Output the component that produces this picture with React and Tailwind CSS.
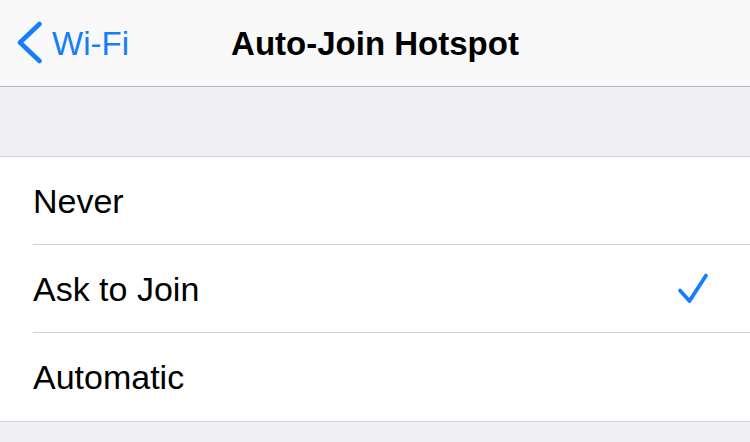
import { useState } from "react";

const options = ["Never", "Ask to Join", "Automatic"];

const Check = () => (
  <svg width="34" height="34" viewBox="0 0 34 34" fill="none">
    <path
      d="M4 18.5 L13.5 29 L30 3.5"
      stroke="#157efb"
      strokeWidth="3.8"
      strokeLinecap="round"
      strokeLinejoin="round"
    />
  </svg>
);

const App = () => {
  const [selected, setSelected] = useState("Ask to Join");

  return (
    <div
      className="w-[750px] h-[442px] overflow-hidden bg-[#efeff4] text-black"
      style={{ fontFamily: '"Liberation Sans", Arial, sans-serif' }}
    >
      {/* nav bar */}
      <div className="relative h-[87px] bg-[#f9f9f9] border-b border-[#b9b9bd] flex items-center justify-center">
        <button className="absolute left-[16px] top-0 h-full flex items-center gap-[8px] text-[#157efb]">
          <svg width="28" height="44" viewBox="0 0 28 44" fill="none">
            <path
              d="M23.5 3 L4 21.5 L23.5 40"
              stroke="#157efb"
              strokeWidth="4.5"
              strokeLinecap="round"
              strokeLinejoin="round"
            />
          </svg>
          <span className="text-[33px] leading-none">Wi-Fi</span>
        </button>
        <h1 className="text-[33px] font-bold leading-none">Auto-Join Hotspot</h1>
      </div>

      {/* spacer */}
      <div className="h-[70px] border-b border-[#d4d4d8]" />

      {/* options */}
      <div className="bg-white border-b border-[#d4d4d8]">
        {options.map((opt, i) => (
          <div
            key={opt}
            onClick={() => setSelected(opt)}
            className="pl-[33px] cursor-pointer"
          >
            <div
              className={
                "h-[88px] flex items-center justify-between pr-[40px] " +
                (i < options.length - 1 ? "border-b border-[#cfcfd3]" : "")
              }
            >
              <span className="text-[34px] leading-none">{opt}</span>
              {selected === opt && <Check />}
            </div>
          </div>
        ))}
      </div>
    </div>
  );
};

export default App;
